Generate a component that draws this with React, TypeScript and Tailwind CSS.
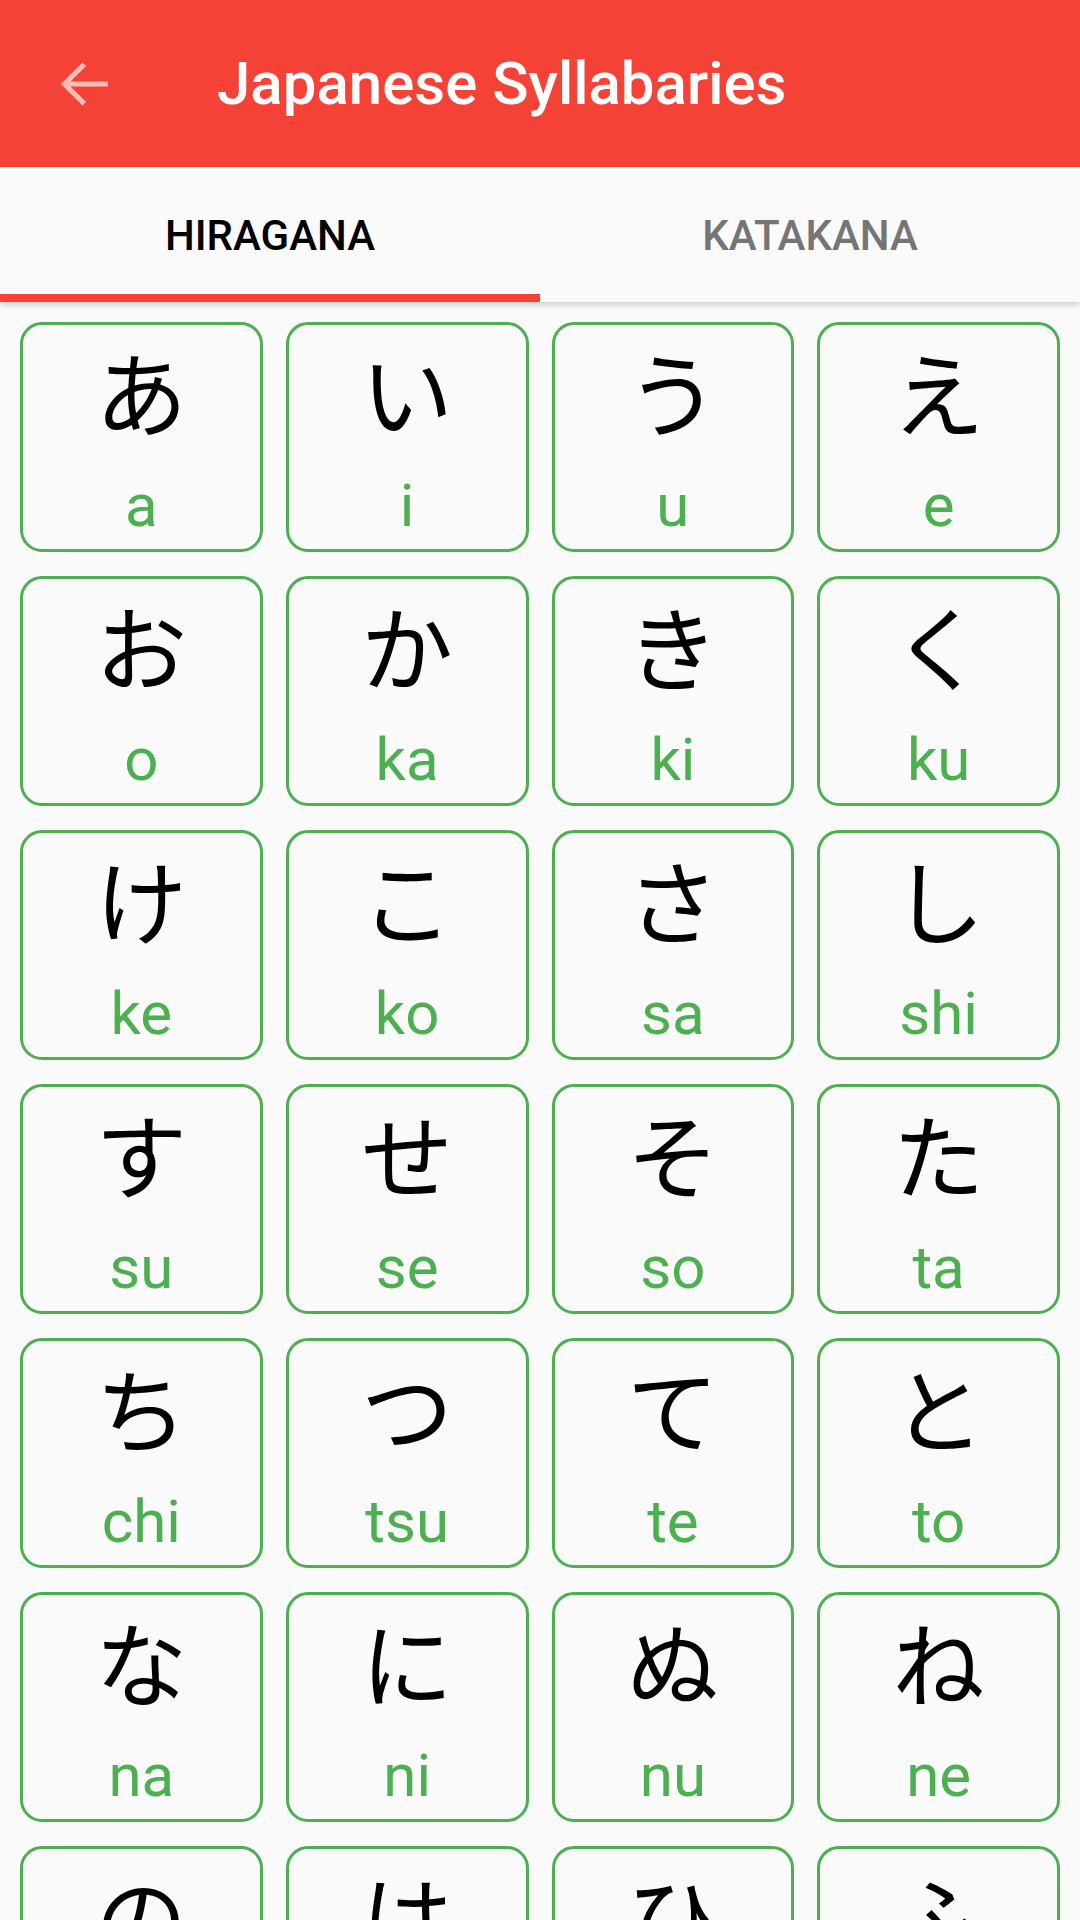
import React from "react";

const kana: [string, string][] = [
  ["あ", "a"], ["い", "i"], ["う", "u"], ["え", "e"],
  ["お", "o"], ["か", "ka"], ["き", "ki"], ["く", "ku"],
  ["け", "ke"], ["こ", "ko"], ["さ", "sa"], ["し", "shi"],
  ["す", "su"], ["せ", "se"], ["そ", "so"], ["た", "ta"],
  ["ち", "chi"], ["つ", "tsu"], ["て", "te"], ["と", "to"],
  ["な", "na"], ["に", "ni"], ["ぬ", "nu"], ["ね", "ne"],
  ["の", "no"], ["は", "ha"], ["ひ", "hi"], ["ふ", "fu"],
];

function KanaCard({ char, roman }: { char: string; roman: string }) {
  return (
    <div className="h-[230px] rounded-[22px] border-[3px] border-[#4caf50] bg-[#fafafa] flex flex-col items-center">
      <span className="mt-[19px] text-[92px] leading-none text-black font-['Noto_Sans_CJK_JP',sans-serif]">
        {char}
      </span>
      <span className="mt-[40px] text-[60px] leading-none text-[#4caf50] font-['Roboto',sans-serif]">
        {roman}
      </span>
    </div>
  );
}

export default function App() {
  return (
    <div className="w-[1080px] h-[1920px] overflow-hidden flex flex-col bg-[#fafafa] font-['Roboto',sans-serif]">
      <header className="h-[167px] shrink-0 bg-[#f44336] flex items-center">
        <button className="ml-[48px] w-[72px] h-[72px] flex items-center justify-center">
          <svg width="72" height="72" viewBox="0 0 24 24" fill="rgba(255,255,255,0.65)">
            <path d="M20 11.2H7.5l5.2-5.2-1.2-1.2L4.3 12l7.2 7.2 1.2-1.2-5.2-5.2H20z" />
          </svg>
        </button>
        <h1 className="ml-[97px] text-[60px] font-medium text-white">Japanese Syllabaries</h1>
      </header>

      <nav className="relative z-10 shrink-0 h-[135px] bg-[#fafafa] flex shadow-[0_3px_6px_rgba(0,0,0,0.18)]">
        <div className="flex-1 flex flex-col">
          <div className="flex-1 flex items-center justify-center pt-[10px] text-[42px] font-medium text-black">
            HIRAGANA
          </div>
          <div className="h-[8px] bg-[#f44336]" />
        </div>
        <div className="flex-1 flex flex-col">
          <div className="flex-1 flex items-center justify-center pt-[10px] text-[42px] font-medium text-[#757575]">
            KATAKANA
          </div>
          <div className="h-[8px]" />
        </div>
      </nav>

      <main className="flex-1 overflow-hidden pt-[20px] px-[20px]">
        <div className="grid grid-cols-4 gap-x-[23px] gap-y-[24px]">
          {kana.map(([c, r]) => (
            <KanaCard key={c} char={c} roman={r} />
          ))}
        </div>
      </main>
    </div>
  );
}
